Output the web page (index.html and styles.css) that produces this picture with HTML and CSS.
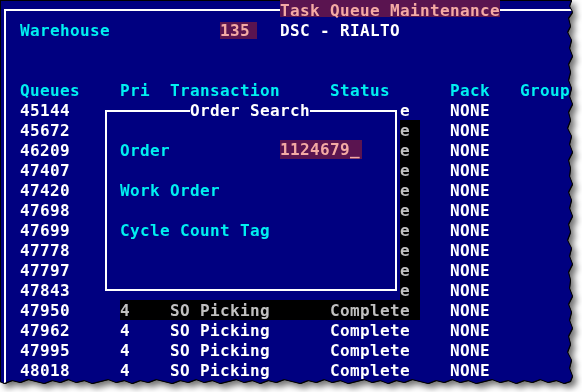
FILE: index.html
```html
<!DOCTYPE html>
<html>
<head>
<meta charset="utf-8">
<link rel="stylesheet" href="styles.css">
</head>
<body>
<div class="paper">
  <div class="screen">
    <div class="lines">
      <div class="row r-title"><span class="hl top">Task Queue Maintenance</span></div>
      <div class="row r-wh"><span class="c">Warehouse</span><span><span class="hl mid">135</span></span><span class="w">DSC - RIALTO</span></div>
      <div class="row"></div>
      <div class="row"></div>
      <div class="row tbl c"><span>Queues</span><span>Pri</span><span>Transaction</span><span>Status</span><span>Pack</span><span>Group</span></div>
      <div class="row tbl"><span>45144</span><span></span><span></span><span><span class="tail">e</span></span><span>NONE</span><span></span></div>
      <div class="row tbl"><span>45672</span><span></span><span></span><span><span class="tail sel">e</span></span><span>NONE</span><span></span></div>
      <div class="row tbl"><span>46209</span><span></span><span></span><span><span class="tail sel">e</span></span><span>NONE</span><span></span></div>
      <div class="row tbl"><span>47407</span><span></span><span></span><span><span class="tail sel">e</span></span><span>NONE</span><span></span></div>
      <div class="row tbl"><span>47420</span><span></span><span></span><span><span class="tail sel">e</span></span><span>NONE</span><span></span></div>
      <div class="row tbl"><span>47698</span><span></span><span></span><span><span class="tail sel">e</span></span><span>NONE</span><span></span></div>
      <div class="row tbl"><span>47699</span><span></span><span></span><span><span class="tail sel">e</span></span><span>NONE</span><span></span></div>
      <div class="row tbl"><span>47778</span><span></span><span></span><span><span class="tail sel">e</span></span><span>NONE</span><span></span></div>
      <div class="row tbl"><span>47797</span><span></span><span></span><span><span class="tail sel">e</span></span><span>NONE</span><span></span></div>
      <div class="row tbl"><span>47843</span><span></span><span></span><span><span class="tail sel">e</span></span><span>NONE</span><span></span></div>
      <div class="row tbl"><span>47950</span><span class="sel">4</span><span class="sel">SO Picking</span><span><span class="stat sel">Complete</span></span><span>NONE</span><span></span></div>
      <div class="row tbl"><span>47962</span><span>4</span><span>SO Picking</span><span>Complete</span><span>NONE</span><span></span></div>
      <div class="row tbl"><span>47995</span><span>4</span><span>SO Picking</span><span>Complete</span><span>NONE</span><span></span></div>
      <div class="row tbl"><span>48018</span><span>4</span><span>SO Picking</span><span>Complete</span><span>NONE</span><span></span></div>
    </div>
    <div class="popup">
      <div class="plines">
        <div class="row p-title"><span class="ptitle">Order Search</span></div>
        <div class="row"></div>
        <div class="row p-field"><span class="c">Order</span><span><span class="hl inp">1124679_</span></span></div>
        <div class="row"></div>
        <div class="row p-field"><span class="c">Work Order</span></div>
        <div class="row"></div>
        <div class="row p-field"><span class="c">Cycle Count Tag</span></div>
      </div>
    </div>
  </div>
</div>
</body>
</html>
```
FILE: styles.css
```css
html, body {
  margin: 0;
  padding: 0;
  background: #ffffff;
}
body {
  width: 582px;
  height: 392px;
  overflow: hidden;
}
.paper {
  width: 582px;
  height: 392px;
  filter: drop-shadow(1px 0 0 #000) drop-shadow(0 1px 0 #000) drop-shadow(4px 4px 3px rgba(0, 0, 0, 0.55));
}
.screen {
  position: relative;
  width: 576px;
  height: 386px;
  background: #000080;
  box-shadow: inset 1px 1px 0 #000;
  font-family: "DejaVu Sans Mono", monospace;
  font-weight: bold;
  font-size: 16px;
  letter-spacing: 0.37px;
  color: #ffffff;
  clip-path: polygon(0 0, 571px 0, 569px 6px, 572px 12px, 568px 18px, 570px 26px, 567px 32px, 571px 40px, 569px 48px, 572px 56px, 568px 64px, 570px 72px, 568px 80px, 571px 88px, 569px 96px, 572px 104px, 568px 112px, 570px 120px, 567px 128px, 571px 136px, 569px 144px, 572px 152px, 568px 160px, 570px 168px, 569px 176px, 572px 184px, 568px 192px, 571px 200px, 569px 208px, 572px 216px, 568px 224px, 570px 232px, 567px 240px, 571px 248px, 569px 256px, 572px 264px, 568px 272px, 570px 280px, 569px 288px, 572px 296px, 568px 304px, 571px 312px, 569px 320px, 572px 328px, 568px 336px, 570px 344px, 567px 352px, 571px 360px, 569px 368px, 572px 376px, 570px 381px, 564px 383px, 556px 380px, 548px 382px, 540px 379px, 532px 382px, 524px 380px, 516px 383px, 508px 380px, 500px 382px, 492px 379px, 484px 381px, 476px 383px, 468px 380px, 460px 382px, 452px 379px, 444px 382px, 436px 380px, 428px 383px, 420px 381px, 412px 379px, 404px 382px, 396px 380px, 388px 383px, 380px 380px, 372px 382px, 364px 379px, 356px 381px, 348px 383px, 340px 380px, 332px 382px, 324px 379px, 316px 382px, 308px 380px, 300px 383px, 292px 381px, 284px 379px, 276px 382px, 268px 380px, 260px 383px, 252px 380px, 244px 382px, 236px 379px, 228px 381px, 220px 383px, 212px 380px, 204px 382px, 196px 379px, 188px 382px, 180px 380px, 172px 383px, 164px 381px, 156px 379px, 148px 382px, 140px 380px, 132px 383px, 124px 380px, 116px 382px, 108px 379px, 100px 381px, 92px 383px, 84px 380px, 76px 382px, 68px 379px, 60px 382px, 52px 380px, 44px 383px, 36px 381px, 28px 379px, 20px 382px, 12px 380px, 4px 383px, 0 381px);
}
.screen::before {
  content: "";
  position: absolute;
  left: 4px;
  top: 9px;
  right: -20px;
  bottom: -20px;
  border-top: 2px solid #ffffff;
  border-left: 2px solid #ffffff;
}
.lines {
  position: relative;
  z-index: 1;
  display: flex;
  flex-direction: column;
}
.row {
  height: 20px;
  line-height: 20px;
  display: flex;
}
.row > span {
  display: block;
  height: 20px;
  box-sizing: border-box;
  padding-top: 1px;
  white-space: pre;
}
.c { color: #00f0f0; }
.w { color: #ffffff; }

/* title */
.r-title { padding-left: 280px; }
.hl { color: #f4aaa4; }
.row > .hl.top {
  background: linear-gradient(#5a1450 0, #5a1450 17px, transparent 17px);
  width: 220px;
}

/* warehouse */
.r-wh { display: grid; grid-template-columns: 200px 60px 1fr; padding-left: 20px; }
.hl.mid {
  display: inline-block;
  width: 37px;
  height: 19px;
  vertical-align: top;
  background: linear-gradient(transparent 0, transparent 1px, #5a1450 1px, #5a1450 18px, transparent 18px);
}

/* table */
.tbl {
  display: grid;
  grid-template-columns: 100px 50px 160px 120px 70px 1fr;
  padding-left: 20px;
  color: #ffffff;
}
.tbl.c { color: #00f0f0; }
.row > span.sel,
.sel {
  background: #000000;
  color: #c0c0c0;
}
.row > span.sel { margin-top: 0; }
.tail {
  display: inline-block;
  margin-left: 70px;
  width: 20px;
  height: 20px;
  margin-top: -1px;
  padding-top: 1px;
  box-sizing: border-box;
  vertical-align: top;
}
.stat {
  display: inline-block;
  width: 90px;
  height: 20px;
  margin-top: -1px;
  padding-top: 1px;
  box-sizing: border-box;
  vertical-align: top;
}

/* popup */
.popup {
  position: absolute;
  left: 100px;
  top: 100px;
  width: 300px;
  height: 200px;
  background: #000080;
  z-index: 2;
}
.popup::before {
  content: "";
  position: absolute;
  left: 5px;
  top: 10px;
  width: 292px;
  height: 181px;
  box-sizing: border-box;
  border: 2px solid #ffffff;
}
.plines {
  position: relative;
  z-index: 1;
  display: flex;
  flex-direction: column;
}
.p-title { padding-left: 90px; }
.row > .ptitle {
  background: #000080;
  color: #ffffff;
}
.p-field { display: grid; grid-template-columns: 160px 1fr; padding-left: 20px; }
.hl.inp {
  display: inline-block;
  width: 82px;
  height: 19px;
  margin-top: -1px;
  vertical-align: top;
  background: #5a1450;
}
```
